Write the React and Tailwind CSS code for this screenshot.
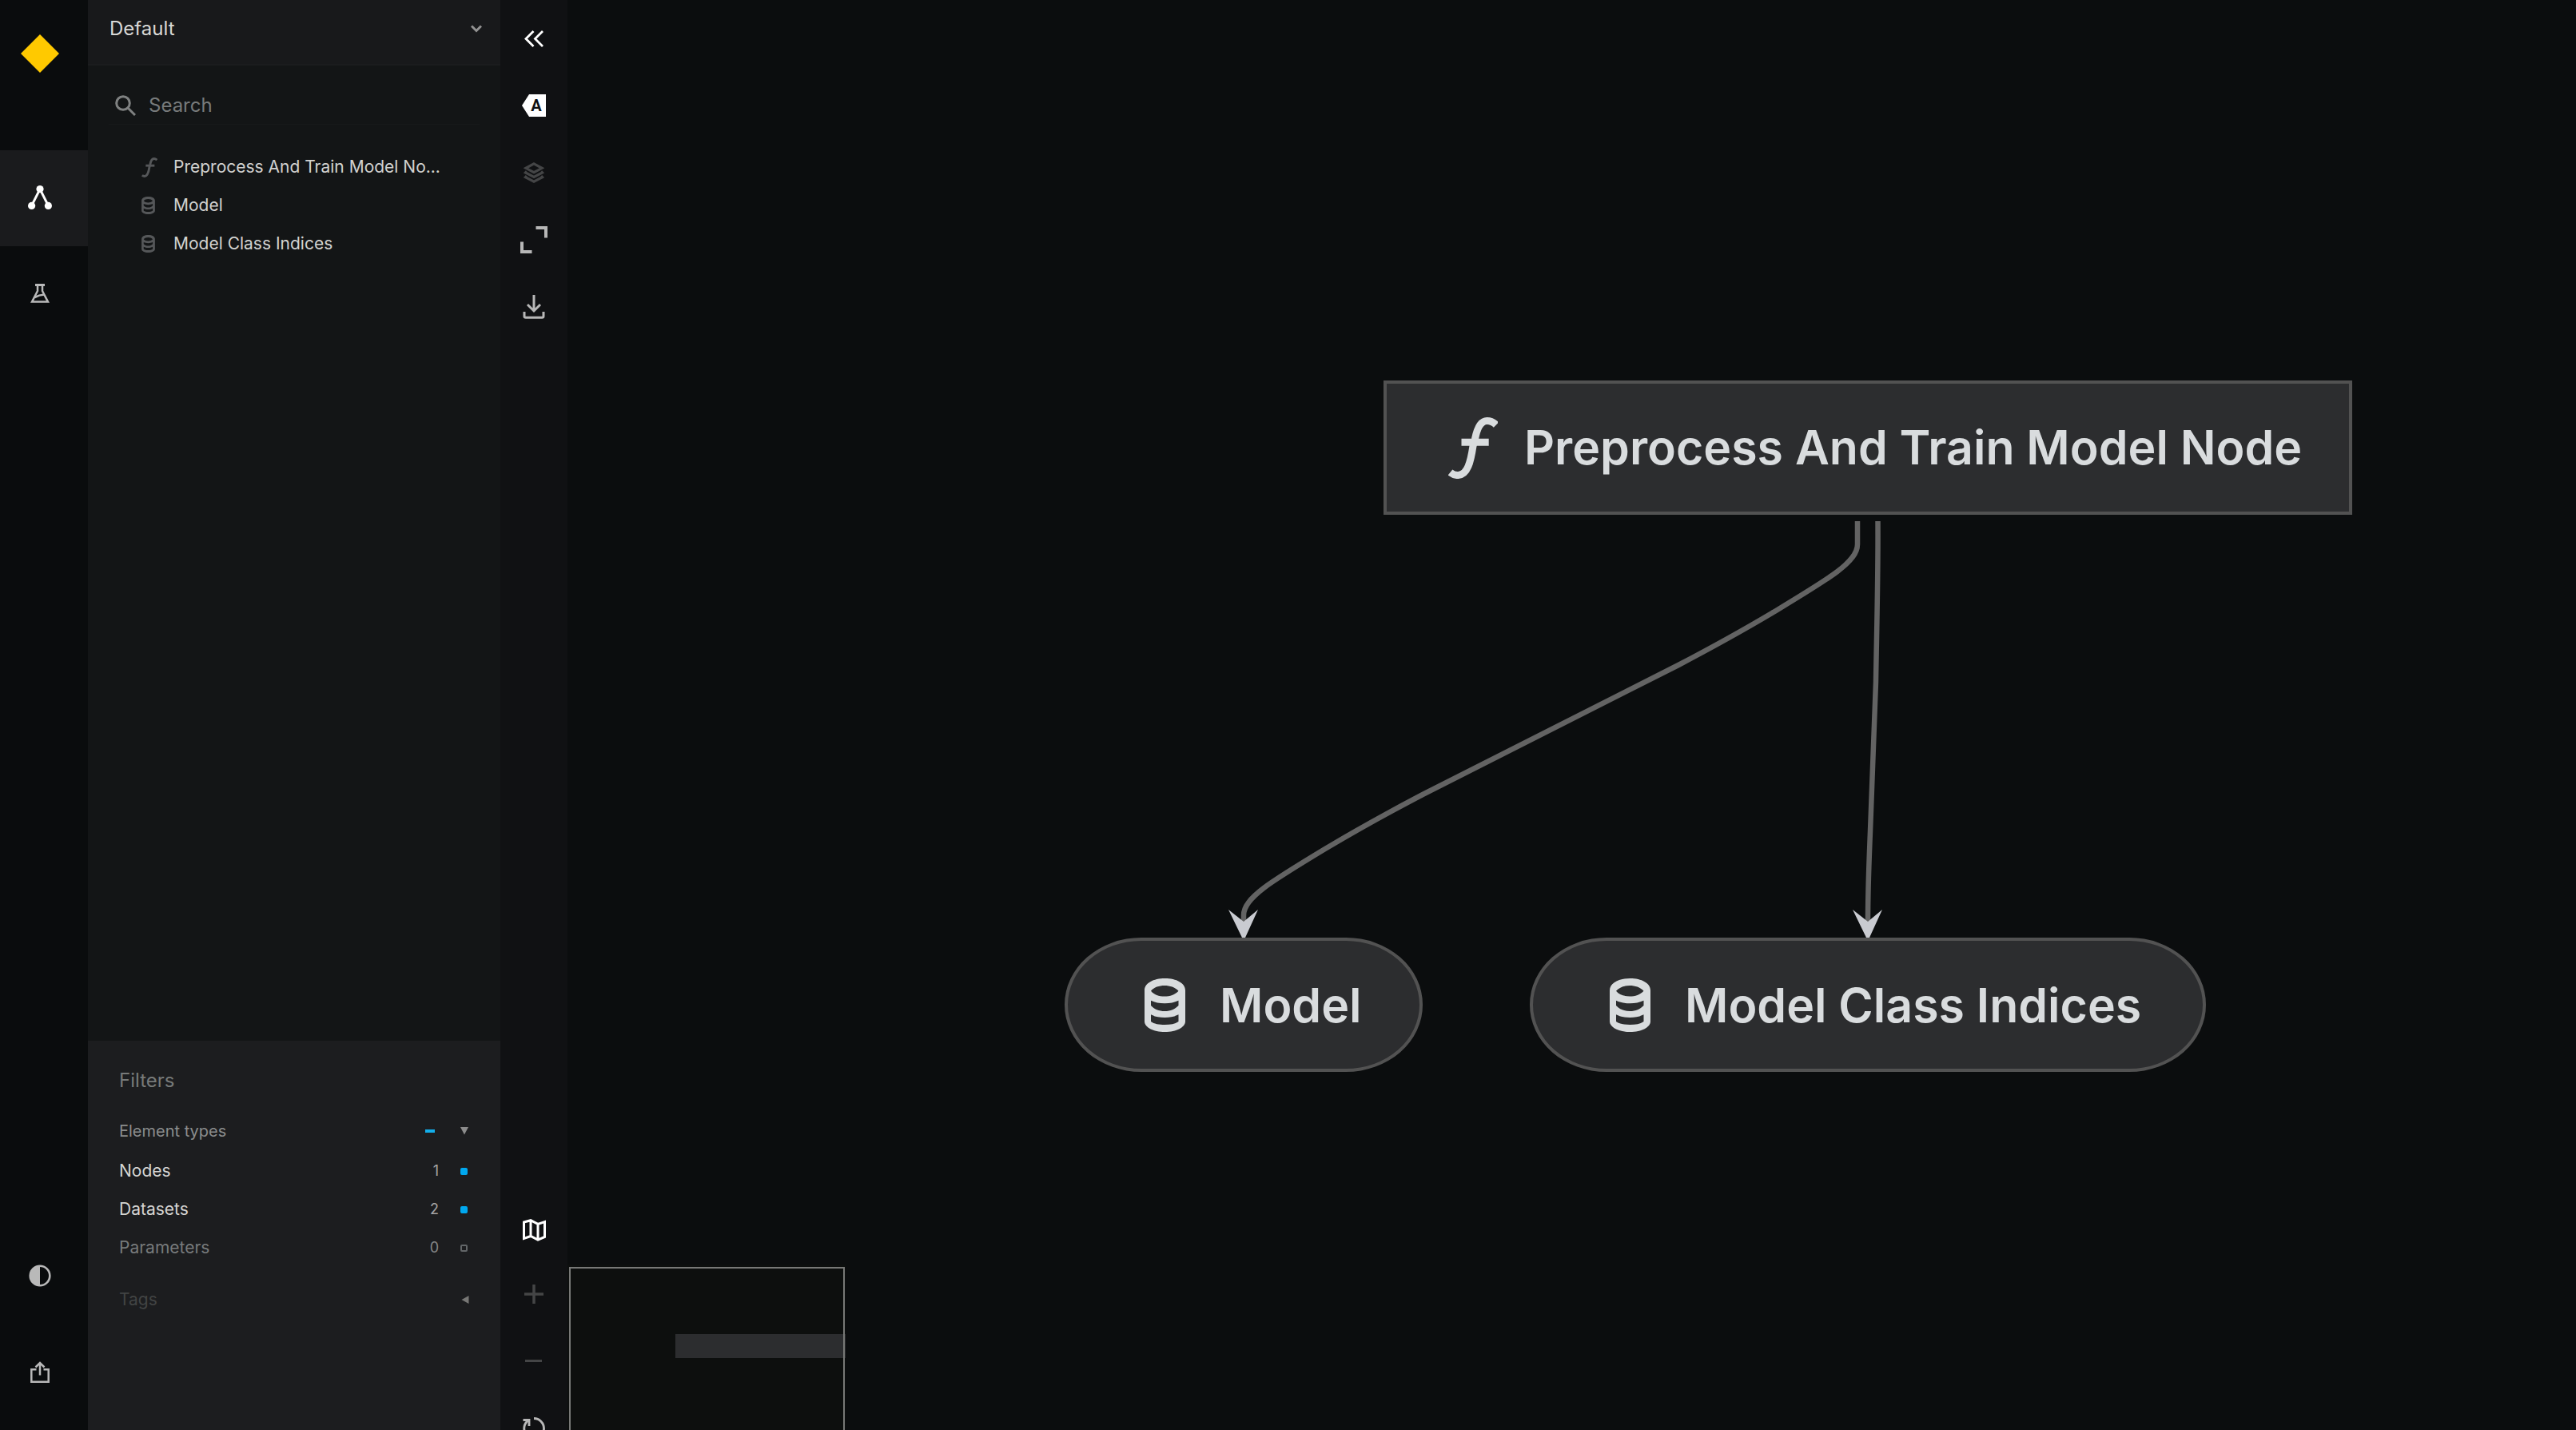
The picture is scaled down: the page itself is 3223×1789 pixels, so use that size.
import { useState } from 'react';

function FunctionIcon({ className }) {
  return (
    <svg viewBox="0 0 62 77" className={className} fill="none" stroke="currentColor" strokeWidth="9" aria-hidden="true">
      <path d="M2.5 69C6 71.8 9 72.8 12.5 72.5C24 72 28 56 31 36L33.5 27C36.5 12 41 4.5 48.5 4.5C53 4.5 56.500 6 60 9.500" />
      <path d="M16.500 31.300H50.700" />
    </svg>
  );
}

function DatasetIcon({ className }) {
  return (
    <svg viewBox="0 0 51 67" className={className} fill="currentColor" fillRule="evenodd" aria-hidden="true">
      <path d="M0 15C0 6 11 0 25.500 0S51 6 51 15V54C51 61 40 67 25.500 67S0 61 0 54ZM8 15.700C12 20.500 18 22.500 25 22.500S38 20.500 42.500 15.700C38 11 32 9 25 9S12 11 8 15.700ZM8 27.700V34C12 38.500 18 41 25.300 41S38 38.500 42.500 34V27.700C37 30 32 31.300 25.300 31.300S13 30 8 27.700ZM8 45.300V54C12 57 18 58 25.300 58S38 57 42.500 54V45.300C37 48 32 49 25.300 49S13 48 8 45.300Z" />
    </svg>
  );
}

function RailButton({ label, active, children }) {
  return (
    <button
      type="button"
      aria-label={label}
      className={
        active
          ? 'flex h-30 w-full items-center justify-center bg-[#1a1b1d] pr-2.5 pb-0.5 text-white'
          : 'flex h-30 w-full items-center justify-center pr-2.5 pb-0.5 text-[#b9b9b9]'
      }
    >
      {children}
    </button>
  );
}

function Rail() {
  return (
    <nav aria-label="Main" className="flex w-[110px] shrink-0 flex-col justify-between bg-[#0a0c0d] pb-3">
      <div>
        <a href="#home" aria-label="Home" className="flex h-47 justify-center pt-[43px] pr-2.5">
          <svg viewBox="0 0 48 48" className="size-12" aria-hidden="true">
            <path d="M24 0L48 24L24 48L0 24Z" fill="#ffc900" />
          </svg>
        </a>
        <RailButton label="Flowchart" active>
          <svg viewBox="0 0 30 30" className="size-[30px]" aria-hidden="true">
            <path d="M4.500 25.500L15 4.500L25.500 25.500" fill="none" stroke="currentColor" strokeWidth="3" />
            <circle cx="15" cy="4.600" r="4.600" fill="currentColor" />
            <circle cx="4.600" cy="25.400" r="4.600" fill="currentColor" />
            <circle cx="25.400" cy="25.400" r="4.600" fill="currentColor" />
          </svg>
        </RailButton>
        <RailButton label="Experiment tracking">
          <svg viewBox="0 0 24 24" className="size-6" fill="none" stroke="currentColor" strokeWidth="2.500" aria-hidden="true">
            <path d="M6 1.500H18" strokeWidth="3" />
            <path d="M9 2V9L2 22.600H22L15 9V2" />
            <path d="M5.500 17L11 14.600L17.500 13.500" />
          </svg>
        </RailButton>
      </div>
      <div>
        <RailButton label="Toggle theme">
          <svg viewBox="0 0 28 28" className="size-7" aria-hidden="true">
            <circle cx="14" cy="14" r="12.300" fill="none" stroke="currentColor" strokeWidth="2.600" />
            <path d="M14 1A13 13 0 0 0 14 27Z" fill="currentColor" />
          </svg>
        </RailButton>
        <RailButton label="Share">
          <svg viewBox="0 0 24 27" className="h-[27px] w-6" fill="none" stroke="currentColor" strokeWidth="2.500" aria-hidden="true">
            <path d="M7.500 10.300H1.300V25.700H22.700V10.300H16.500" />
            <path d="M12 17.500V2.500M6.500 7.500L12 2L17.500 7.500" />
          </svg>
        </RailButton>
      </div>
    </nav>
  );
}

const treeItems = [
  { name: 'Preprocess And Train Model No...', kind: 'node' },
  { name: 'Model', kind: 'dataset' },
  { name: 'Model Class Indices', kind: 'dataset' },
];

function FilterRow({ id, name, count, initial }) {
  const [on, setOn] = useState(initial);
  const disabled = count === 0;
  return (
    <li className="flex h-12 items-center pr-[41px] pl-[39px]">
      <label htmlFor={id} className={disabled ? 'flex-1 text-[#777a7b]' : 'flex-1 text-[#d6d6d4]'}>
        {name}
      </label>
      <span className={disabled ? 'pr-[27px] text-lg text-[#858788]' : 'pr-[27px] text-lg text-[#a5a5a5]'}>{count}</span>
      <input
        id={id}
        type="checkbox"
        checked={on}
        onChange={() => setOn(!on)}
        className="size-[9px] appearance-none rounded-[2px] border-2 border-[#626668] checked:border-[#00a8ef] checked:bg-[#00a8ef]"
      />
    </li>
  );
}

function Sidebar() {
  return (
    <aside className="flex w-[516px] shrink-0 flex-col bg-[#131516] text-[21px] text-[#d2d2d0]">
      <div className="grid h-[82px] shrink-0 items-center border-b-2 border-[#1b1c1e] bg-[#18191b] pb-[9px]">
        <select
          aria-label="Pipeline"
          className="col-start-1 row-start-1 h-full w-full appearance-none bg-transparent pl-[27px] text-2xl text-[#d8d8d6]"
        >
          <option>Default</option>
        </select>
        <svg
          viewBox="0 0 14 10"
          className="pointer-events-none col-start-1 row-start-1 mr-[23px] h-2.5 w-3.5 justify-self-end text-[#929292]"
          fill="none"
          stroke="currentColor"
          strokeWidth="3"
          aria-hidden="true"
        >
          <path d="M1 1.500L7 7.500L13 1.500" />
        </svg>
      </div>

      <label className="mx-[26px] mt-[26px] flex h-12 shrink-0 items-center border-b border-[#17191a] pt-px pl-2">
        <svg viewBox="0 0 26 26" className="size-[26px] text-[#7f8181]" fill="none" stroke="currentColor" strokeWidth="3" aria-hidden="true">
          <circle cx="10" cy="10" r="8.300" />
          <path d="M16 16L25 25" />
        </svg>
        <input
          type="text"
          placeholder="Search"
          aria-label="Search"
          className="ml-4 min-w-0 flex-1 bg-transparent text-2xl text-[#d8d8d6] outline-none placeholder:text-[#777a7b]"
        />
      </label>

      <ul className="mt-[29px] min-h-0 flex-1">
        {treeItems.map((item) => (
          <li key={item.name}>
            <button type="button" className="flex h-12 w-full items-center pr-16 pl-[67px] text-left">
              <span className="flex w-5 shrink-0 text-[#555759]">
                {item.kind === 'node' ? <FunctionIcon className="h-[25px] w-5" /> : <DatasetIcon className="h-[22px] w-[17px]" />}
              </span>
              <span className="ml-5 whitespace-nowrap">{item.name}</span>
            </button>
          </li>
        ))}
      </ul>

      <section className="shrink-0 bg-[#1c1d1f] pt-[26px] pb-[139px]">
        <h2 className="flex h-12 items-center pl-[39px] text-2xl text-[#777a79]">Filters</h2>
        <div className="mt-[15px] flex h-12 items-center pr-10 pl-[39px]">
          <h3 className="flex-1 text-xl text-[#8b8d8d]">Element types</h3>
          <button type="button" aria-label="Toggle all element types" className="mr-8 h-1 w-3 bg-[#13aeea]" />
          <button type="button" aria-label="Collapse element types" className="text-[#8c8c8c]">
            <svg viewBox="0 0 10 10" className="size-2.5" fill="currentColor" aria-hidden="true">
              <path d="M0 0H10L5 9.500Z" />
            </svg>
          </button>
        </div>
        <ul className="mt-0.5">
          <FilterRow id="filter-nodes" name="Nodes" count={1} initial />
          <FilterRow id="filter-datasets" name="Datasets" count={2} initial />
          <FilterRow id="filter-parameters" name="Parameters" count={0} initial={false} />
        </ul>
        <div className="mt-[17px] flex h-12 items-center pr-[39px] pl-[39px]">
          <h3 className="flex-1 text-[#424444]">Tags</h3>
          <button type="button" aria-label="Expand tags" className="text-[#777775]">
            <svg viewBox="0 0 10 10" className="size-2.5" fill="currentColor" aria-hidden="true">
              <path d="M9.500 0V10L0.500 5Z" />
            </svg>
          </button>
        </div>
      </section>
    </aside>
  );
}

function ToolButton({ label, tone, children }) {
  const tones = {
    bright: 'flex h-21 w-full items-center justify-center text-white',
    normal: 'flex h-21 w-full items-center justify-center text-[#b7b7b7]',
    dim: 'flex h-21 w-full items-center justify-center text-[#444546]',
  };
  return (
    <button type="button" aria-label={label} className={tones[tone]}>
      {children}
    </button>
  );
}

function Toolbar() {
  return (
    <div role="toolbar" aria-label="Chart controls" className="flex w-21 shrink-0 flex-col justify-between bg-[#101113] pt-1.5">
      <div>
        <ToolButton label="Hide menu" tone="bright">
          <svg viewBox="0 0 24 21" className="h-[21px] w-6" fill="none" stroke="currentColor" strokeWidth="2.800" aria-hidden="true">
            <path d="M11.500 1L2 10.500L11.500 20M23 1L13.500 10.500L23 20" />
          </svg>
        </ToolButton>
        <ToolButton label="Hide text labels" tone="bright">
          <svg viewBox="0 0 30 28" className="h-7 w-[30px]" aria-hidden="true">
            <path d="M0 14L9 0H30V28H9Z" fill="currentColor" />
            <text x="18" y="21" textAnchor="middle" fill="#101113" className="font-[Roboto] text-xl font-bold">
              A
            </text>
          </svg>
        </ToolButton>
        <ToolButton label="Toggle layers" tone="dim">
          <svg viewBox="0 0 26 26" className="size-[26px]" fill="none" stroke="currentColor" strokeWidth="3.200" aria-hidden="true">
            <path d="M13 1.900L23 7.300L13 12.700L3 7.300Z" />
            <path d="M4 11.500L2.500 13L13 18.500L23.500 13L22 11.500" />
            <path d="M4 17.200L2.500 18.700L13 24.200L23.500 18.700L22 17.200" />
          </svg>
        </ToolButton>
        <ToolButton label="Expand pipelines" tone="normal">
          <svg viewBox="0 0 34 34" className="size-[34px]" fill="none" stroke="currentColor" strokeWidth="4" aria-hidden="true">
            <path d="M19.500 2H32V14.500M2 19.500V32H14.500" />
          </svg>
        </ToolButton>
        <ToolButton label="Export" tone="normal">
          <svg viewBox="0 0 28 30" className="h-[30px] w-7" fill="none" stroke="currentColor" strokeWidth="3" aria-hidden="true">
            <path d="M14 0V20M6 12L14 20L22 12" />
            <path d="M2 21V26.500Q2 28.300 3.800 28.300H24.200Q26 28.300 26 26.500V21" />
          </svg>
        </ToolButton>
      </div>
      <div className="-mb-10">
        <div className="-mb-1 pt-1">
          <ToolButton label="Toggle minimap" tone="bright">
            <svg viewBox="0 0 29 28" className="h-7 w-[29px]" fill="none" stroke="currentColor" strokeWidth="3" aria-hidden="true">
              <path d="M1.500 4L10 1.700L19 6.300L27.500 3.500V22.500L19 26.200L10 21.500L1.500 24.500ZM10 2V22M19 6V26" />
            </svg>
          </ToolButton>
        </div>
        <ToolButton label="Zoom in" tone="dim">
          <svg viewBox="0 0 24 24" className="size-6" fill="none" stroke="currentColor" strokeWidth="3.500" aria-hidden="true">
            <path d="M12 0V24M0 12H24" />
          </svg>
        </ToolButton>
        <ToolButton label="Zoom out" tone="dim">
          <svg viewBox="0 0 22 4" className="h-1 w-[22px]" aria-hidden="true">
            <path d="M0 0H21V3H0Z" fill="currentColor" />
          </svg>
        </ToolButton>
        <ToolButton label="Reset zoom" tone="normal">
          <svg viewBox="0 0 28 28" className="size-7" fill="none" stroke="currentColor" strokeWidth="2.900" aria-hidden="true">
            <path d="M14 1.500A12.500 12.500 0 0 1 14 26.500" />
            <path d="M14 26.500A12.500 12.500 0 0 1 7.500 3.500" />
            <path d="M0.500 3.500H8V11" />
          </svg>
        </ToolButton>
      </div>
    </div>
  );
}

function Flowchart() {
  return (
    <main className="relative min-w-0 flex-1 overflow-hidden bg-[#0b0d0e] text-[59px] leading-none font-semibold text-[#d9dcde]">
      <svg viewBox="0 0 2513 1789" className="absolute top-0 left-0 h-[1789px] w-[2513px]" aria-hidden="true">
        <g fill="none" stroke="#636363" strokeWidth="6.500">
          <path d="M1614 652V681C1614 703 1580 723 1507 767C1470 789 1430 811 1390 832L1070 994C1030 1015 990 1037 953 1059C880 1103 846 1123 846 1145V1155" />
          <path d="M1639.500 652C1640 720 1638 790 1637 853L1630 1040C1628 1090 1627 1110 1627 1155" />
        </g>
        <g fill="#c9cbd1">
          <path d="M827 1138L846 1153L864 1138L848 1173H844Z" />
          <path d="M1608 1138L1627 1153L1645 1138L1629 1173H1625Z" />
        </g>
      </svg>

      <button type="button" className="absolute top-[476px] left-[1021px] flex h-[168px] w-[1212px] items-center border-4 border-[#525252] bg-[#2c2d2f] pl-[77px]">
        <FunctionIcon className="h-[77px] w-[62px]" />
        <span className="ml-[33px] pb-0.5 whitespace-nowrap">Preprocess And Train Model Node</span>
      </button>

      <button type="button" className="absolute top-[1173px] left-[622px] flex h-[168px] w-[448px] items-center rounded-[96px/84px] border-4 border-[#525252] bg-[#2c2d2f] pl-24">
        <DatasetIcon className="h-[67px] w-[51px]" />
        <span className="ml-[43px] whitespace-nowrap">Model</span>
      </button>

      <button type="button" className="absolute top-[1173px] left-[1204px] flex h-[168px] w-[846px] items-center rounded-[96px/84px] border-4 border-[#525252] bg-[#2c2d2f] pl-24">
        <DatasetIcon className="h-[67px] w-[51px]" />
        <span className="ml-[43px] whitespace-nowrap">Model Class Indices</span>
      </button>

      <div aria-label="Minimap" className="absolute bottom-0 left-0 h-[207px] w-[348px] bg-[#0d0f0e]">
        <div className="absolute top-[87px] left-[135px] h-[30px] w-[213px] bg-[#2c2d2f]" />
        <div className="absolute top-[3px] left-[2px] h-[204px] w-[345px] border-2 border-b-0 border-[#777876]" />
      </div>
    </main>
  );
}

export default function App() {
  return (
    <div className="flex h-screen w-full overflow-hidden bg-[#0b0d0e] font-[Inter,sans-serif]">
      <Rail />
      <Sidebar />
      <Toolbar />
      <Flowchart />
    </div>
  );
}
